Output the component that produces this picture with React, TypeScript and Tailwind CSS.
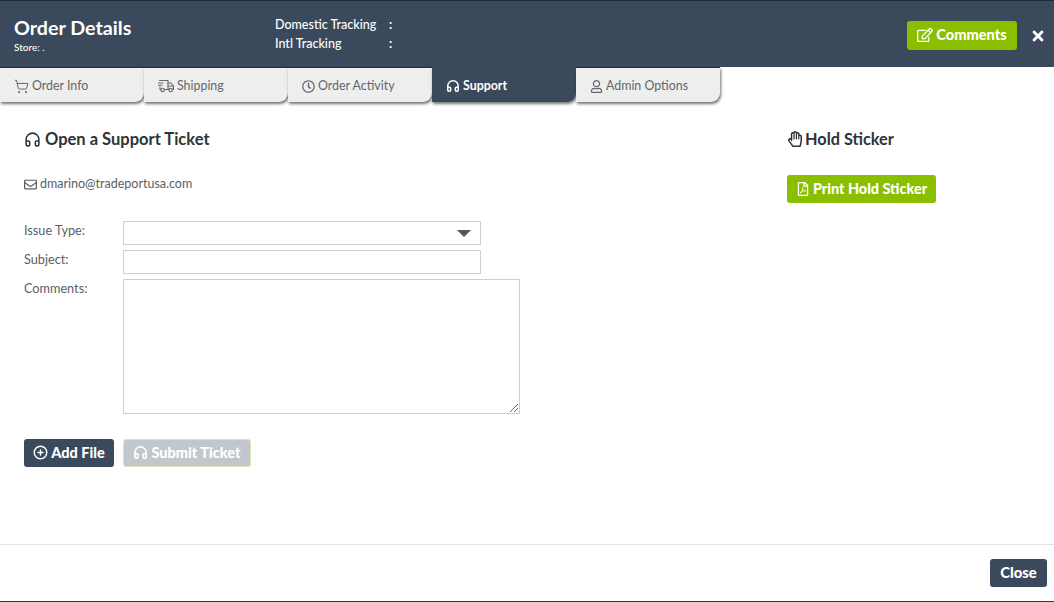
import React from "react";
import { ShoppingCart, Headphones, CirclePlus } from "lucide-react";
import { FaRegEdit, FaTimes, FaRegClock, FaRegEnvelope, FaRegHandPaper, FaRegFilePdf, FaRegUser } from "react-icons/fa";

function FastTruck({ size = 16 }: { size?: number }) {
  return (
    <svg width={size} height={size} viewBox="0 0 16 16" fill="none" stroke="currentColor" strokeWidth="1.1" strokeLinecap="round" strokeLinejoin="round">
      <path d="M1.5 2.5H10V11.5H6.6" />
      <path d="M0.5 5H5M0.5 7.2H4M2 9.2V11.5H2.6" />
      <path d="M10 5H13L15.5 8V11.5H14.4M10 11.5H11" />
      <path d="M10.5 8H15.2" />
      <circle cx="4.6" cy="12" r="1.7" />
      <circle cx="12.7" cy="12" r="1.7" />
    </svg>
  );
}

const tabs = [
  { label: "Order Info", icon: <ShoppingCart size={15} strokeWidth={1.6} /> },
  { label: "Shipping", icon: <FastTruck /> },
  { label: "Order Activity", icon: <FaRegClock size={13} /> },
  { label: "Support", icon: <Headphones size={14} strokeWidth={2.6} />, active: true },
  { label: "Admin Options", icon: <FaRegUser size={13} /> },
];

export default function App() {
  return (
    <div className="w-[1054px] h-[602px] flex flex-col bg-white text-[#5a5f65] overflow-hidden border-b border-[#2d3641] font-['Lato','Liberation_Sans',sans-serif]">
      <header className="h-[67px] shrink-0 bg-[#3a4a5c] border-t border-[#232c36] flex items-start text-white">
        <div className="w-[261px] pl-[14px] pt-[15px]">
          <h1 className="text-[19.7px] leading-[24px] font-bold">Order Details</h1>
          <p className="text-[10px] leading-[12px] mt-[1px] font-medium">Store: .</p>
        </div>
        <div className="pl-[14px] pt-[14px] text-[12.5px] leading-[19px] font-medium">
          <div className="flex"><span className="w-[114px]">Domestic Tracking</span><span className="font-bold">:</span></div>
          <div className="flex"><span className="w-[114px]">Intl Tracking</span><span className="font-bold">:</span></div>
        </div>
        <div className="ml-auto flex items-center pt-[20px] pr-[8px]">
          <button className="w-[110px] h-[29px] pb-[1px] bg-[#8abf00] rounded-[3px] flex items-center justify-center gap-[3px] text-[14.6px] font-black">
            <FaRegEdit size={16} />Comments
          </button>
          <FaTimes size={16} className="ml-[13px]" />
        </div>
      </header>

      <nav className="h-[35px] shrink-0 flex">
        {tabs.map((t) => (
          <div
            key={t.label}
            className={`w-[144px] h-[35px] pl-[14px] pt-[2px] flex items-center gap-[3px] text-[12.4px] rounded-br-[9px] border-t shadow-[1px_2px_3px_rgba(0,0,0,0.55)] ${
              t.active ? "bg-[#3a4a5c] text-white font-bold border-[#3a4a5c]" : "bg-[#eeeeee] text-[#62666b] border-[#232c36]"
            }`}
          >
            {t.icon}
            <span>{t.label}</span>
          </div>
        ))}
      </nav>

      <main className="flex-1 flex pl-[24px] pt-[27px]">
        <section className="w-[763px]">
          <h2 className="flex items-center gap-[4px] text-[16.5px] leading-[20px] font-bold text-[#2f3338]">
            <Headphones size={17} strokeWidth={2.2} />Open a Support Ticket
          </h2>
          <div className="flex items-center gap-[3px] mt-[27px] text-[12.5px] leading-[16px]">
            <FaRegEnvelope size={13} />dmarino@tradeportusa.com
          </div>
          <form className="mt-[29px] grid grid-cols-[99px_1fr] gap-y-[5px] text-[12.7px]">
            <label className="leading-[18px]">Issue Type:</label>
            <div className="w-[358px] h-[24px] border border-[#cfcfcf] flex items-center justify-end pr-[9px]">
              <span className="w-0 h-0 border-x-[7px] border-x-transparent border-t-[7px] border-t-[#555]" />
            </div>
            <label className="leading-[18px]">Subject:</label>
            <div className="w-[358px] h-[24px] border border-[#cfcfcf]" />
            <label className="leading-[18px]">Comments:</label>
            <div className="relative w-[397px] h-[135px] border border-[#cfcfcf]">
              <svg className="absolute right-[1px] bottom-[1px]" width="9" height="9" viewBox="0 0 9 9" stroke="#666" strokeWidth="1">
                <path d="M1 9L9 1M5 9L9 5" />
              </svg>
            </div>
          </form>
          <div className="flex gap-[9px] mt-[25px]">
            <button className="w-[90px] h-[28px] pb-[1px] rounded-[3px] bg-[#3a4a5c] text-white text-[14.5px] font-black flex items-center justify-center gap-[3px]">
              <CirclePlus size={15} strokeWidth={2.4} />Add File
            </button>
            <button className="w-[128px] h-[28px] pb-[1px] rounded-[3px] bg-[#c2c7cd] border border-[#d9e8b3] text-white text-[14.5px] font-black flex items-center justify-center gap-[3px]">
              <Headphones size={15} strokeWidth={2.6} />Submit Ticket
            </button>
          </div>
        </section>
        <aside>
          <h2 className="flex items-center gap-[2px] text-[16.3px] leading-[20px] font-bold text-[#2f3338]">
            <FaRegHandPaper size={16} />Hold Sticker
          </h2>
          <button className="mt-[26px] w-[149px] h-[28px] pb-[1px] rounded-[3px] bg-[#8abf00] text-white text-[14.4px] font-black flex items-center justify-center gap-[3px]">
            <FaRegFilePdf size={14} />Print Hold Sticker
          </button>
        </aside>
      </main>

      <footer className="h-[57px] shrink-0 border-t border-[#e3e3e3] flex items-start justify-end pt-[14px] pr-[7px]">
        <button className="w-[57px] h-[28px] pb-[1px] rounded-[3px] bg-[#3a4a5c] text-white text-[14.8px] font-black">Close</button>
      </footer>
    </div>
  );
}
